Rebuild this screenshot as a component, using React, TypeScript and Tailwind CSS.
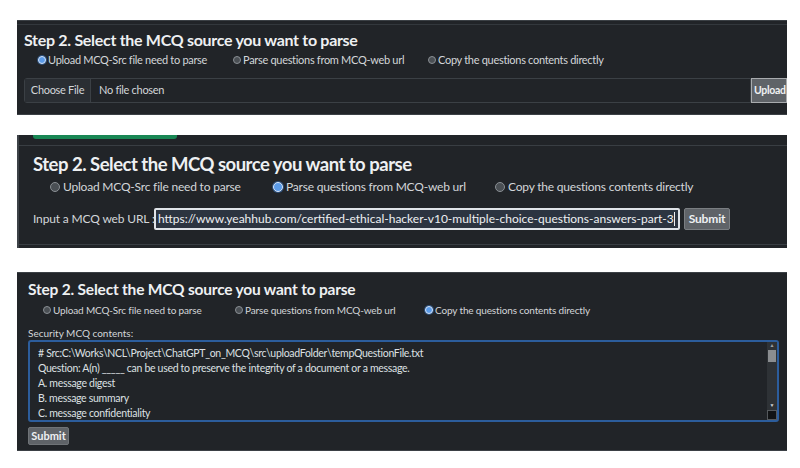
import React from "react";

const font = { fontFamily: 'Lato, "Open Sans", sans-serif' };

function Radio({ checked, size = "w-[8px] h-[8px]" }: { checked?: boolean; size?: string }) {
  return (
    <span
      className={`${size} inline-block shrink-0 rounded-full border ${
        checked
          ? "border-[#d6e4f7] bg-[#5b9be8] shadow-[0_0_0_1px_#2f4f77]"
          : "border-[#8a8f94] bg-[#4a4f54]"
      }`}
    />
  );
}

export default function App() {
  const lines = [
    "# Src:C:\\Works\\NCL\\Project\\ChatGPT_on_MCQ\\src\\uploadFolder\\tempQuestionFile.txt",
    "Question: A(n) _____ can be used to preserve the integrity of a document or a message.",
    "A. message digest",
    "B. message summary",
    "C. message confidentiality",
  ];

  return (
    <div className="w-[800px] h-[468px] bg-white" style={font}>
      <div className="flex flex-col pl-[17px] pt-[20px]">
        {/* Panel 1: upload file */}
        <div className="w-[770px] h-[95px] bg-[#212428] border-t border-b border-[#3b4045] text-[#d3d6d9]">
          <div className="mt-[3px] border-t border-[#33383d]" />
          <div className="pl-[7px] pt-[4px] h-[26px] text-[16px] tracking-[-0.3px] leading-[22px] font-bold text-[#eef0f2]">
            Step 2. Select the MCQ source you want to parse
          </div>
          <div className="flex items-center h-[18px] pl-[21px] text-[11px] tracking-[-0.3px] whitespace-nowrap">
            <label className="flex items-center gap-[2px] w-[195px]">
              <Radio checked />
              Upload MCQ-Src file need to parse
            </label>
            <label className="flex items-center gap-[2px] w-[195px]">
              <Radio />
              Parse questions from MCQ-web url
            </label>
            <label className="flex items-center gap-[2px]">
              <Radio />
              Copy the questions contents directly
            </label>
          </div>
          <div className="flex mt-[9px] pl-[7px] h-[25px]">
            <div className="flex flex-1 items-center border border-[#3b4045] rounded-l-[3px] text-[11px] tracking-[-0.3px]">
              <span className="h-full w-[66px] flex items-center justify-center bg-[#2a2e33] border-r border-[#3b4045]">
                Choose File
              </span>
              <span className="pl-[8px]">No file chosen</span>
            </div>
            <button className="w-[36px] h-full overflow-hidden whitespace-nowrap bg-[#5f6368] border border-[#a8abae] text-[10.5px] tracking-[-0.3px] font-bold text-[#eef0f2] text-left pl-[2px]">
              Upload
            </button>
          </div>
        </div>

        {/* Panel 2: web url */}
        <div className="mt-[20px] w-[770px] h-[113px] bg-[#212428] border-l-2 border-[#3d4247] text-[#d3d6d9]">
          <div className="ml-[14px] w-[144px] h-[4px] bg-[#198754] rounded-b-[3px]" />
          <div className="mt-[6px] border-t border-[#393e43]" />
          <div className="pl-[14px] pt-[6px] h-[32px] text-[18.5px] tracking-[-0.5px] leading-[24px] font-bold text-[#eef0f2]">
            Step 2. Select the MCQ source you want to parse
          </div>
          <div className="flex items-center h-[18px] pl-[31px] text-[12px] tracking-[-0.2px] whitespace-nowrap">
            <label className="flex items-center gap-[3px] w-[223px]">
              <Radio size="w-[10px] h-[10px]" />
              Upload MCQ-Src file need to parse
            </label>
            <label className="flex items-center gap-[3px] w-[222px]">
              <Radio checked size="w-[10px] h-[10px]" />
              Parse questions from MCQ-web url
            </label>
            <label className="flex items-center gap-[3px]">
              <Radio size="w-[10px] h-[10px]" />
              Copy the questions contents directly
            </label>
          </div>
          <div className="flex items-center mt-[12px] pl-[14px] h-[22px] text-[12px] tracking-[-0.15px] whitespace-nowrap">
            <span className="w-[121px]">Input a MCQ web URL :</span>
            <div className="w-[526px] h-[22px] flex items-center border-2 border-[#dfe3e8] rounded-[2px] bg-[#2c3440] pl-[2px] text-[#eef0f2] tracking-normal overflow-hidden">
              https://www.yeahhub.com/certified-ethical-hacker-v10-multiple-choice-questions-answers-part-3
              <span className="inline-block w-[1px] h-[14px] bg-[#eef0f2]" />
            </div>
            <button className="ml-[4px] w-[46px] h-[22px] bg-[#5f6368] border border-[#7a7e82] rounded-[2px] text-[12px] font-bold text-[#eef0f2]">
              Submit
            </button>
          </div>
          <div className="mt-[14px] border-t border-[#393e43]" />
        </div>

        {/* Panel 3: paste contents */}
        <div className="mt-[24px] w-[770px] h-[179px] bg-[#212428] border-t border-b border-[#3b4045] text-[#d3d6d9]">
          <div className="pl-[11px] pt-[5px] h-[28px] text-[15.5px] tracking-[-0.2px] leading-[22px] font-bold text-[#eef0f2]">
            Step 2. Select the MCQ source you want to parse
          </div>
          <div className="flex items-center h-[18px] pl-[26px] text-[10px] tracking-[-0.15px] whitespace-nowrap">
            <label className="flex items-center gap-[2px] w-[192px]">
              <Radio />
              Upload MCQ-Src file need to parse
            </label>
            <label className="flex items-center gap-[2px] w-[190px]">
              <Radio />
              Parse questions from MCQ-web url
            </label>
            <label className="flex items-center gap-[2px]">
              <Radio checked />
              Copy the questions contents directly
            </label>
          </div>
          <div className="pl-[11px] mt-[7px] h-[14px] text-[10px] leading-[14px]">Security MCQ contents:</div>
          <div className="ml-[11px] w-[751px] h-[82px] flex border-2 border-[#2c5d9c] rounded-[3px] bg-[#212428]">
            <div className="flex-1 pl-[8px] pt-[4px] text-[10.5px] tracking-[-0.3px] leading-[15px] text-[#dde0e3] overflow-hidden whitespace-nowrap">
              {lines.map((l) => (
                <div key={l}>{l}</div>
              ))}
            </div>
            <div className="w-[10px] flex flex-col bg-[#2e3236]">
              <div className="h-[8px] flex items-center justify-center text-[5px] text-[#9a9ea2]">▲</div>
              <div className="h-[12px] mx-[1px] bg-[#8a8d90]" />
              <div className="flex-1" />
              <div className="h-[8px] flex items-center justify-center text-[5px] text-[#d0d3d6]">▼</div>
              <div className="h-[10px] bg-[#111315] border border-[#55595d]" />
            </div>
          </div>
          <button className="ml-[11px] w-[41px] h-[18px] bg-[#5f6368] border border-[#6f7377] rounded-[2px] text-[11px] font-bold text-[#eef0f2]">
            Submit
          </button>
        </div>
      </div>
    </div>
  );
}
